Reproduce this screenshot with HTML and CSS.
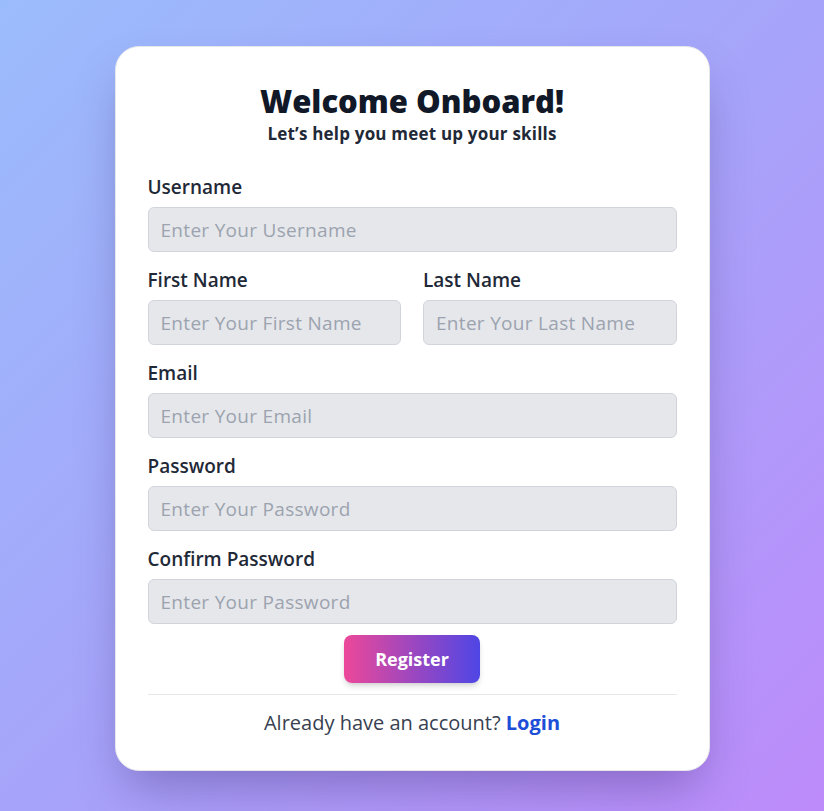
FILE: index.html
```html
<!DOCTYPE html>
<html lang="en">
<head>
<meta charset="utf-8">
<title>Welcome Onboard</title>
<link rel="stylesheet" href="styles.css">
</head>
<body>
<main class="page">
  <form class="card">
    <h1 class="title">Welcome Onboard!</h1>
    <p class="subtitle">Let’s help you meet up your skills</p>

    <div class="field">
      <label class="label" for="username">Username</label>
      <input class="input" id="username" type="text" placeholder="Enter Your Username">
    </div>

    <div class="row">
      <div class="field">
        <label class="label" for="first">First Name</label>
        <input class="input" id="first" type="text" placeholder="Enter Your First Name">
      </div>
      <div class="field">
        <label class="label" for="last">Last Name</label>
        <input class="input" id="last" type="text" placeholder="Enter Your Last Name">
      </div>
    </div>

    <div class="field">
      <label class="label" for="email">Email</label>
      <input class="input" id="email" type="email" placeholder="Enter Your Email">
    </div>

    <div class="field">
      <label class="label" for="password">Password</label>
      <input class="input" id="password" type="password" placeholder="Enter Your Password">
    </div>

    <div class="field">
      <label class="label" for="confirm">Confirm Password</label>
      <input class="input" id="confirm" type="password" placeholder="Enter Your Password">
    </div>

    <div class="actions">
      <button class="btn" type="button">Register</button>
    </div>

    <p class="footer">Already have an account? <a class="link" href="#">Login</a></p>
  </form>
</main>
</body>
</html>
```

FILE: styles.css
```css
* { box-sizing: border-box; }

html, body {
  margin: 0;
  padding: 0;
}

body {
  font-family: "Open Sans", "Noto Sans", sans-serif;
  color: #1f2937;
}

.page {
  min-height: 811px;
  display: flex;
  align-items: flex-start;
  justify-content: center;
  padding-top: 46px;
  background: linear-gradient(135deg, #9bbcfc 0%, #a6a4fa 50%, #bd8bfa 100%);
}

.card {
  width: 595px;
  background: #ffffff;
  border: 1px solid #e5e7eb;
  border-radius: 24px;
  padding: 36px 32px 33px;
  box-shadow: 0 25px 50px -12px rgba(40, 20, 90, 0.35);
  display: flex;
  flex-direction: column;
}

.title {
  margin: 0;
  text-align: center;
  font-size: 31px;
  line-height: 36px;
  font-weight: 800;
  color: #111827;
}

.subtitle {
  margin: 3px 0 25px;
  text-align: center;
  font-size: 17px;
  line-height: 24px;
  font-weight: 700;
  letter-spacing: 0.2px;
  color: #1f2937;
}

.field {
  display: flex;
  flex-direction: column;
  margin-bottom: 12px;
  min-width: 0;
}

.row {
  display: grid;
  grid-template-columns: 1fr 1fr;
  column-gap: 22px;
}

.label {
  font-size: 19px;
  line-height: 28px;
  font-weight: 600;
  color: #1f2937;
  padding-top: 2px;
  margin-bottom: 6px;
}

.input {
  width: 100%;
  height: 45px;
  padding: 0 12px;
  border: 1px solid #d1d5db;
  border-radius: 6px;
  background: #e5e7eb;
  font-family: inherit;
  font-size: 19px;
  letter-spacing: 0.3px;
  color: #111827;
  outline: none;
}

.input::placeholder {
  color: #9ca3af;
}

.actions {
  display: flex;
  justify-content: center;
  padding-bottom: 11px;
  border-bottom: 1px solid #e5e7eb;
  margin-top: -1px;
}

.btn {
  width: 136px;
  height: 48px;
  border: none;
  border-radius: 8px;
  background: linear-gradient(90deg, #ec4899 0%, #4f46e5 100%);
  color: #ffffff;
  font-family: inherit;
  font-size: 18px;
  font-weight: 700;
  box-shadow: 0 4px 6px -1px rgba(0, 0, 0, 0.15), 0 2px 4px -2px rgba(0, 0, 0, 0.1);
  cursor: pointer;
}

.footer {
  margin: 14px 0 0;
  text-align: center;
  font-size: 20px;
  line-height: 28px;
  color: #374151;
}

.link {
  color: #1d4ed8;
  font-weight: 700;
  text-decoration: none;
}
```
